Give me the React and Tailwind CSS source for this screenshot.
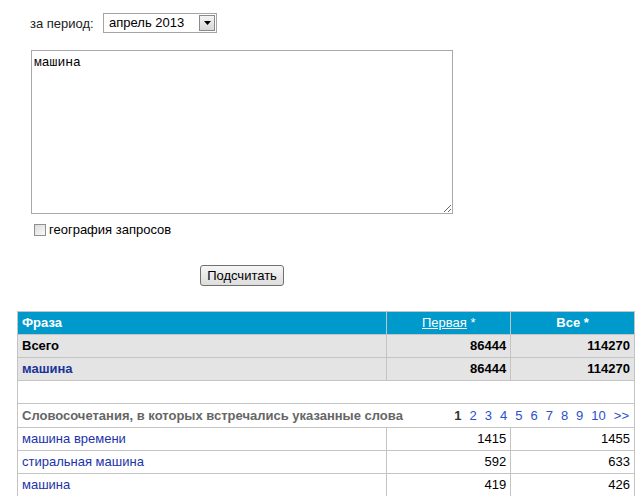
import { useState } from "react";

const ROWS = [
    { phrase: "машина времени", first: 1415, all: 1455 },
    { phrase: "стиральная машина", first: 592, all: 633 },
    { phrase: "машина", first: 419, all: 426 },
];

const PAGES = ["2", "3", "4", "5", "6", "7", "8", "9", "10", ">>"];

export default function App() {
    const [query, setQuery] = useState("машина");
    const [geo, setGeo] = useState(false);

    return (
        <div className="bg-white w-[639px] h-[496px] overflow-hidden font-['Liberation_Sans',Arial,sans-serif] text-[13px] text-black">
            {/* PERIOD */}
            <div className="flex items-start pt-[13px] pl-[30px] h-[50px]">
                <span className="mt-[1px] w-[73px] text-[#222]">за период:</span>
                <div className="flex items-center border border-[#a5a5a5] w-[114px] h-[20px]">
                    <span className="flex-1 pl-[5px] leading-[18px]">апрель 2013</span>
                    <div className="flex justify-center items-center bg-gradient-to-b from-[#f4f4f4] to-[#d8d8d8] mr-[1px] border border-[#8a8a8a] w-[16px] h-[16px]">
                        <svg width="7" height="4" viewBox="0 0 7 4">
                            <path d="M0 0h7L3.5 4z" fill="#000" />
                        </svg>
                    </div>
                </div>
            </div>

            {/* QUERY */}
            <div className="pl-[31px]">
                <textarea
                    value={query}
                    onChange={(e) => setQuery(e.target.value)}
                    className="block px-[2px] py-[4px] border border-[#a9a9a9] w-[422px] h-[164px] [font-family:'Liberation_Mono','Courier_New',monospace] text-[13px] leading-[15px] resize-y outline-none"
                />
                <label className="flex items-center gap-[3px] mt-[9px] ml-[3px] h-[14px] cursor-pointer">
                    <span
                        onClick={() => setGeo(!geo)}
                        className="flex justify-center items-center bg-gradient-to-br from-[#dcdcdc] to-[#fafafa] border border-[#8e8f8f] w-[12px] h-[12px] text-[9px] leading-none"
                    >
                        {geo ? "✓" : ""}
                    </span>
                    <span>география запросов</span>
                </label>
            </div>

            <div className="flex pt-[28px] pl-[200px]">
                <button className="bg-gradient-to-b from-[#f6f6f6] to-[#dddddd] border border-[#707070] rounded-[3px] w-[84px] h-[21px] text-[13px] leading-[19px]">
                    Подсчитать
                </button>
            </div>

            {/* RESULTS */}
            <table className="mt-[25px] ml-[17px] border border-[#c4c4c4] border-collapse w-[618px]">
                <colgroup>
                    <col className="w-[370px]" />
                    <col className="w-[124px]" />
                    <col className="w-[124px]" />
                </colgroup>
                <thead>
                    <tr className="bg-[#0099cc] h-[23px] font-bold text-white">
                        <td className="px-[4px] border border-[#c4c4c4] text-left">Фраза</td>
                        <td className="px-[4px] border border-[#c4c4c4] font-normal text-center">
                            <a href="#" className="underline">Первая</a> *
                        </td>
                        <td className="px-[4px] border border-[#c4c4c4] text-center">Все *</td>
                    </tr>
                </thead>
                <tbody>
                    <tr className="bg-[#e4e4e4] h-[23px] font-bold">
                        <td className="px-[4px] border border-[#c4c4c4]">Всего</td>
                        <td className="px-[4px] border border-[#c4c4c4] text-right">86444</td>
                        <td className="px-[4px] border border-[#c4c4c4] text-right">114270</td>
                    </tr>
                    <tr className="bg-[#e4e4e4] h-[23px] font-bold">
                        <td className="px-[4px] border border-[#c4c4c4] text-[#1a3399]">машина</td>
                        <td className="px-[4px] border border-[#c4c4c4] text-right">86444</td>
                        <td className="px-[4px] border border-[#c4c4c4] text-right">114270</td>
                    </tr>
                    <tr className="h-[23px]">
                        <td colSpan={3}></td>
                    </tr>
                    <tr className="h-[24px]">
                        <td colSpan={3} className="px-[4px] border border-[#c4c4c4]">
                            <div className="flex justify-between items-center">
                                <span className="font-bold text-[#666]">
                                    Словосочетания, в которых встречались указанные слова
                                </span>
                                <span className="flex gap-[8px] pr-[1px]">
                                    <span className="font-bold text-[#333]">1</span>
                                    {PAGES.map((p) => (
                                        <a key={p} href="#" className="text-[#2a4fd0]">
                                            {p}
                                        </a>
                                    ))}
                                </span>
                            </div>
                        </td>
                    </tr>
                    {ROWS.map((row) => (
                        <tr key={row.phrase} className="h-[23px]">
                            <td className="px-[4px] border border-[#c4c4c4]">
                                <a href="#" className="text-[#2233aa]">{row.phrase}</a>
                            </td>
                            <td className="px-[4px] border border-[#c4c4c4] text-right">{row.first}</td>
                            <td className="px-[4px] border border-[#c4c4c4] text-right">{row.all}</td>
                        </tr>
                    ))}
                </tbody>
            </table>
        </div>
    );
}
